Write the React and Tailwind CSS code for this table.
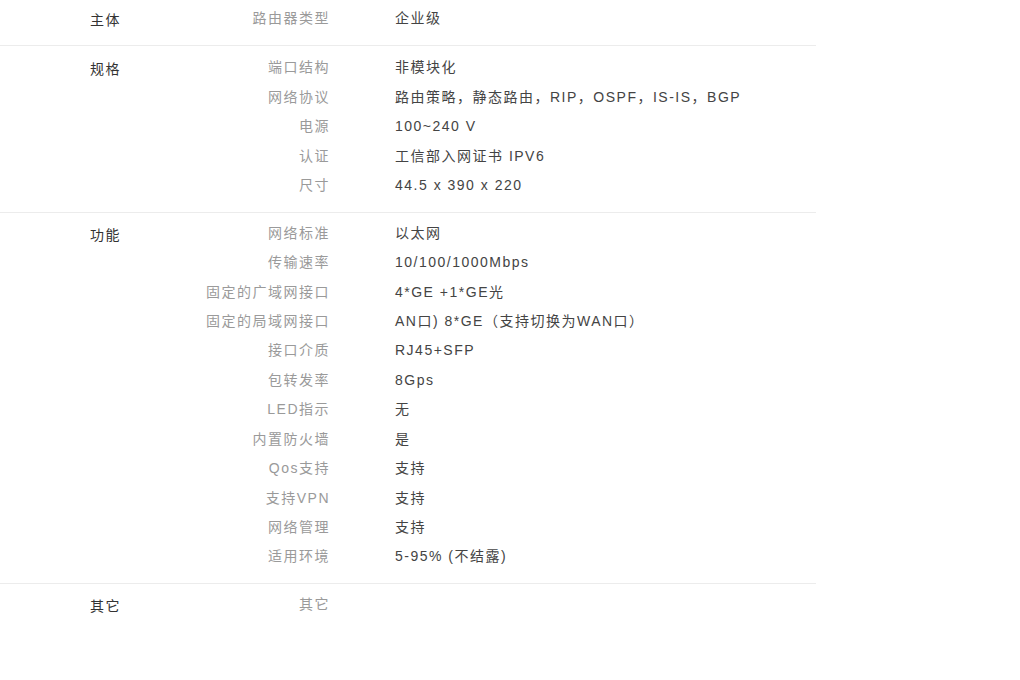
import React from "react";

const sections = [
  {
    title: "主体",
    pt: "pt-[4px]",
    border: false,
    rows: [["路由器类型", "企业级"]],
  },
  {
    title: "规格",
    pt: "pt-[7px]",
    border: true,
    rows: [
      ["端口结构", "非模块化"],
      ["网络协议", "路由策略，静态路由，RIP，OSPF，IS-IS，BGP"],
      ["电源", "100~240 V"],
      ["认证", "工信部入网证书 IPV6"],
      ["尺寸", "44.5 x 390 x 220"],
    ],
  },
  {
    title: "功能",
    pt: "pt-[6px]",
    border: true,
    rows: [
      ["网络标准", "以太网"],
      ["传输速率", "10/100/1000Mbps"],
      ["固定的广域网接口", "4*GE +1*GE光"],
      ["固定的局域网接口", "AN口) 8*GE（支持切换为WAN口）"],
      ["接口介质", "RJ45+SFP"],
      ["包转发率", "8Gps"],
      ["LED指示", "无"],
      ["内置防火墙", "是"],
      ["Qos支持", "支持"],
      ["支持VPN", "支持"],
      ["网络管理", "支持"],
      ["适用环境", "5-95% (不结露)"],
    ],
  },
  {
    title: "其它",
    pt: "pt-[6px]",
    border: true,
    rows: [["其它", ""]],
  },
];

export default function App() {
  return (
    <div
      className="w-[1020px] h-[680px] bg-white text-[14px] tracking-[1.5px]"
      style={{ fontFamily: '"Liberation Sans", "Noto Sans CJK SC", sans-serif' }}
    >
      <div className="w-[816px]">
        {sections.map((s, i) => (
          <div
            key={i}
            className={`flex pl-[90px] ${i === 0 ? "pb-[10px]" : "pb-[11px]"} ${s.pt} ${s.border ? "border-t border-[#ececec]" : ""}`}
          >
            <div className="w-[90px] shrink-0 pt-[2px] leading-[29.45px] text-[#333]">
              {s.title}
            </div>
            <div className="flex flex-col">
              {s.rows.map(([label, value], j) => (
                <div key={j} className="flex leading-[29.45px] h-[29.45px]">
                  <div className="w-[150px] shrink-0 text-right whitespace-nowrap text-[#9a9a9a]">
                    {label}
                  </div>
                  <div className="ml-[65px] whitespace-nowrap text-[#444]">{value}</div>
                </div>
              ))}
            </div>
          </div>
        ))}
      </div>
    </div>
  );
}
